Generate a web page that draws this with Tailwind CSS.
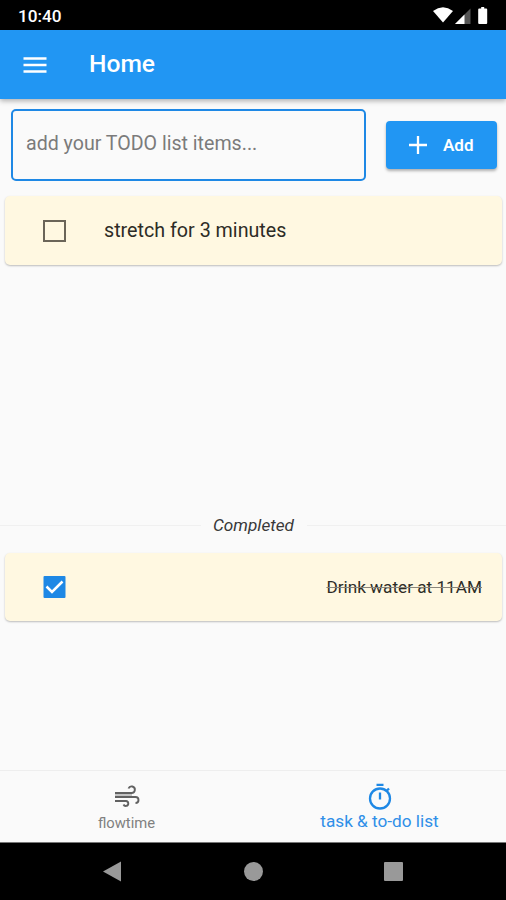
<!DOCTYPE html>
<html lang="en"><head><meta charset="utf-8"><title>Home</title>
<script src="https://cdn.jsdelivr.net/npm/@tailwindcss/browser@4"></script></head>
<body class="w-[506px] h-[900px] overflow-hidden bg-[#fafafa] font-[Roboto,sans-serif] flex flex-col">
<div class="h-[30px] shrink-0 bg-black text-white flex items-center pl-[18px] pr-[15px] pt-[2px]">
<span class="text-[17.200px] leading-5 font-medium">10:40</span>
<svg class="ml-auto" width="58" height="18" viewBox="0 0 58 18"><path d="M0 4Q10 -3.400 20 4L10 15.500z" fill="#fff"/><path d="M37.500 1.500V17H22z" fill="#555"/><path d="M31.500 7.500V17H22z" fill="#fff"/><path d="M46.200 1.500h2V0h3v1.500h2q1 0 1 1v13.500q0 1-1 1h-7q-1 0-1-1V2.500q0-1 1-1z" fill="#fff"/></svg>
</div>
<header class="relative z-10 h-[69px] shrink-0 bg-[#2196f3] text-white flex items-center pl-[23px] shadow-[0_2px_5px_rgba(0,0,0,0.3)]">
<svg width="24" height="18" viewBox="0 0 24 18"><path d="M.5 2.500h23M.5 9h23M.5 15.500h23" stroke="#fff" stroke-width="2.600"/></svg>
<h1 class="ml-[42px] text-[24.600px] font-medium">Home</h1>
</header>
<main class="flex-1 flex flex-col">
<div class="flex pt-[10px] pl-[11px] pr-[9px] h-[97px] shrink-0">
<div class="w-[355px] h-[72px] border-2 border-[#1e88e5] rounded-[5px] pl-[13px] pt-[19px] text-[19.600px] leading-7 text-[#7b7b7b]"><span>add your TODO list items...</span></div>
<button class="ml-5 mt-[12px] w-[111px] h-[48px] rounded-[4px] bg-[#2196f3] text-white flex items-center pl-[23px] shadow-[0_2px_3px_rgba(0,0,0,0.3)]">
<svg width="18" height="18" viewBox="0 0 18 18"><path d="M9 0v18M0 9h18" stroke="#fff" stroke-width="2.300"/></svg><span class="ml-[16px] pt-px text-[17px] font-semibold">Add</span></button>
</div>
<div class="mx-[5px] mr-[4px] h-[69px] shrink-0 rounded-[5px] bg-[#fff8e1] shadow-[0_1px_2px_rgba(0,0,0,0.25)] flex items-center pl-[38px]">
<span class="w-[23px] h-[22px] border-2 border-[#6b6558]"></span><span class="ml-[38px] text-[19.700px] text-[#2d2c26]">stretch for 3 minutes</span>
</div>
<div class="mt-[248px] h-[24px] flex items-center shrink-0"><div class="w-[201px] h-px bg-[#f0f0f0]"></div><span class="ml-3 w-[82px] mr-3 text-[17.200px] leading-6 italic text-[#383838] whitespace-nowrap">Completed</span><div class="flex-1 h-px bg-[#f0f0f0]"></div></div>
<div class="mt-[16px] mx-[5px] mr-[4px] h-[68px] shrink-0 rounded-[5px] bg-[#fff8e1] shadow-[0_1px_2px_rgba(0,0,0,0.25)] flex items-center justify-between pl-[38px] pr-[20px]">
<svg width="23" height="22" viewBox="0 0 23 22"><rect x=".5" width="22" height="22" rx="1" fill="#1e88e5"/><path d="M3.500 10.500l5.500 5.500L19.500 5.500" fill="none" stroke="#fff" stroke-width="2.500"/></svg>
<span class="pt-[2px] text-[17.200px] text-[#2d2c26] line-through decoration-[#8a867b] decoration-1">Drink water at 11AM</span>
</div>
</main>
<nav class="h-[72px] shrink-0 border-t border-[#eeeeee] flex">
<div class="w-1/2 flex flex-col items-center pt-[12px] text-[#808080]">
<svg width="26" height="26" viewBox="0 0 26 26" fill="none" stroke="#616161" stroke-width="1.900"><path d="M1 10h16.500a3.300 3.300 0 1 0-3-4.500M1 14h20.500a3 3 0 0 1 0 6M1 18h11a2.500 2.500 0 1 1-2.500 3.500"/><path d="M1 12h17" stroke="#b0b0b0" stroke-width="1.500"/></svg>
<span class="text-[14.800px] leading-5 mt-[4px]">flowtime</span></div>
<div class="w-1/2 flex flex-col items-center pt-[12px] text-[#2f8fe8]">
<svg width="26" height="28" viewBox="0 0 26 28" fill="none" stroke="#1e88e5" stroke-width="2.300"><circle cx="13" cy="15.500" r="10"/><path d="M9.500 1.800h7M13 9.500v7M20 7.500l2-2"/></svg>
<span class="text-[17.200px] leading-5">task &amp; to-do list</span></div>
</nav>
<div class="h-[58px] shrink-0 bg-black border-t border-[#777] flex items-center justify-between pl-[103px] pr-[103px]">
<svg width="19" height="22" viewBox="0 0 19 22"><path d="M0 10.500L18 .5v20z" fill="#999"/></svg>
<div class="w-[19px] h-[19px] rounded-full bg-[#999]"></div>
<div class="w-[19px] h-[19px] rounded-[1px] bg-[#999]"></div>
</div>
</body></html>
